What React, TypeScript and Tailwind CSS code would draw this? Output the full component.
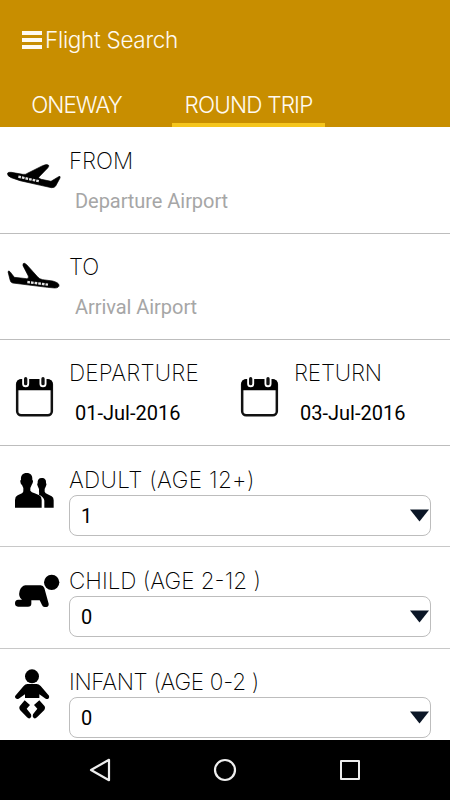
import { useState } from 'react';
import type { ReactNode } from 'react';
import clsx from 'clsx';

type TripType = 'oneway' | 'round';

function TakeoffIcon() {
  return (
    <svg className="w-[54px] h-[25px]" viewBox="21 72 162 75">
      <path d="M23 99 Q25 96 34 97 L68 103 Q76 105 84 99 L128 77 Q142 71 146 76 Q147 80 143 84 L116 112 Q117 116 124 118 L153 124 L176 110 Q182 107 180 114 L167 138 Q163 144 154 143 L122 136 L60 122 L34 113 Q20 107 23 99Z" stroke="#000" strokeWidth="2" />
      <path d="M55 110 L118 124" stroke="#e5e5e5" strokeWidth="7" strokeDasharray="8 3" />
    </svg>
  );
}

function LandingIcon() {
  return (
    <svg className="w-[54px] h-[27px]" viewBox="21 51 162 81">
      <path d="M24 80 Q26 76 30 80 L43 97 L80 101 Q88 101 85 93 L69 62 Q67 54 74 55 L80 59 L114 97 Q118 102 128 104 L158 108 Q177 113 177 121 Q177 129 164 129 L142 127 L38 114 Q31 112 30 104Z" stroke="#000" strokeWidth="2" />
      <path d="M82 111 L144 119" stroke="#e5e5e5" strokeWidth="7" strokeDasharray="8 3" />
    </svg>
  );
}

function CalendarIcon() {
  return (
    <svg className="w-[39px] h-[41px]" viewBox="45 63 117 123">
      <rect x="51.5" y="76" width="104" height="105" rx="12" fill="#fff" stroke="#111" strokeWidth="7.5" />
      <path d="M50 106 V86 Q50 74 62 73 H144 Q157 74 157 86 V106Z" />
      <path d="M77 70 V86 M129 70 V86" stroke="#fff" strokeWidth="21" strokeLinecap="round" />
      <path d="M77 71 V86 M129 71 V86" stroke="#111" strokeWidth="10" strokeLinecap="round" />
    </svg>
  );
}

function AdultsIcon() {
  return (
    <svg className="w-[41px] h-[37px]" viewBox="42 51 123 111">
      <path d="M80 54 C92 54 98 61 97 74 Q101 76 98 84 Q96 88 94 92 L91 99 V107 Q94 112 104 115 L118 121 Q125 125 125 135 V158 H45 V135 Q45 125 53 121 L66 115 Q71 112 70 106 V99 L66 90 Q62 88 61 80 Q60 76 63 74 C62 61 68 54 80 54Z" />
      <path d="M125 69 C135 69 139 75 138 84 Q141 87 138 93 L134 102 V110 Q136 115 143 118 L155 124 Q161 127 161 136 V158 H133 V137 Q132 126 117 119 Q118 115 117 110 V102 L113 93 Q110 87 113 84 C112 75 116 69 125 69Z" />
    </svg>
  );
}

function ChildIcon() {
  return (
    <svg className="w-[47px] h-[34px]" viewBox="42 42 141 102">
      <circle cx="155" cy="67" r="23" />
      <path d="M76 76 H122 Q130 76 133 84 L146 131 Q147 139 139 141 H134 Q128 141 126 135 L119 121 H94 V131 Q94 140 84 140 H54 Q45 140 45 130 Q45 119 55 119 H66 Q54 110 59 92 Q64 78 76 76Z" />
    </svg>
  );
}

function InfantIcon() {
  return (
    <svg className="w-[37px] h-[51px]" viewBox="42 36 111 153">
      <circle cx="96" cy="61" r="21" />
      <path d="M82 84 H110 Q116 84 122 90 L147 119 Q149 124 145 128 Q142 130 137 128 L118 115 V126 H75 V115 L56 128 Q51 131 47 127 Q43 123 46 119 L71 90 Q76 84 82 84Z" />
      <path d="M74 133 L90 147 L80 158 L93 175 Q96 181 91 186 Q86 189 81 184 L60 162 Q56 156 59 151Z M118 133 L102 147 L112 158 L99 175 Q96 181 101 186 Q106 189 111 184 L133 162 Q137 156 134 151Z" />
    </svg>
  );
}

function Label({ children, className }: { children: ReactNode; className: string }) {
  return (
    <div className={clsx("font-['Inter',sans-serif] text-[22.5px] leading-[28px] whitespace-nowrap", className)}>
      {children}
    </div>
  );
}

function AirportRow({ label, placeholder, icon, className }: { label: string; placeholder: string; icon: ReactNode; className: string }) {
  return (
    <div className={clsx('flex shrink-0 border-b border-[#bdbdbd] pl-[7px]', className)}>
      <div className="w-[62px] shrink-0">{icon}</div>
      <div>
        <Label className="font-[250] tracking-[-0.1px]">{label}</Label>
        <div className="pl-1.5 mt-3 text-xl leading-7 tracking-[-0.05px] text-[#a6a6a6]">{placeholder}</div>
      </div>
    </div>
  );
}

function DateField({ label, value, tracking }: { label: string; value: string; tracking: string }) {
  return (
    <div className="flex w-[225px] pl-[15px] pt-[19px]">
      <div className="w-[54px] shrink-0 pt-[17px]"><CalendarIcon /></div>
      <div>
        <Label className={clsx('font-[250]', tracking)}>{label}</Label>
        <div className="pl-1.5 mt-3 text-xl leading-7">{value}</div>
      </div>
    </div>
  );
}

function PassengerRow({ label, value, icon, tracking, className }: { label: string; value: number; icon: ReactNode; tracking: string; className: string }) {
  return (
    <div className={clsx('flex shrink-0 border-b border-[#c8c8c8] pl-3.5 pt-5', className)}>
      <div className="w-[55px] shrink-0">{icon}</div>
      <div className="w-[362px]">
        <Label className={clsx('font-[250]', tracking)}>{label}</Label>
        <button className="flex w-full h-[41px] mt-[1px] items-center justify-between rounded-lg border border-[#bdbdbd] pl-[11px] text-xl">
          <span>{value}</span>
          <svg className="w-5 h-[13px]" viewBox="0 0 20 13">
            <path d="M0 0.5 H19 L9.5 12.5Z" fill="#0b1626" />
          </svg>
        </button>
      </div>
    </div>
  );
}

export default function App() {
  const [trip, setTrip] = useState<TripType>('round');

  return (
    <div className="flex flex-col w-[450px] h-[800px] overflow-hidden bg-white text-black font-['Roboto',sans-serif]">
      <header className="h-[127px] shrink-0 bg-[#c88e00] text-[#fffaf0]">
        <div className="flex h-[83px] items-center pl-[22px]">
          <div className="flex flex-col gap-[3px] w-5 mt-[-3px]">
            <div className="h-1 bg-[#fffaf0]" />
            <div className="h-1 bg-[#fffaf0]" />
            <div className="h-1 bg-[#fffaf0]" />
          </div>
          <Label className="ml-[3px] -mt-1 font-light tracking-[-0.3px]">Flight Search</Label>
        </div>
        <nav className="flex h-11">
          <button onClick={() => setTrip('oneway')} className={clsx('w-[153px] h-full mr-[19px] pt-1 border-b-4', trip === 'oneway' ? 'border-[#f5c51c]' : 'border-transparent')}>
            <Label className="font-light tracking-[-1px]">ONEWAY</Label>
          </button>
          <button onClick={() => setTrip('round')} className={clsx('w-[153px] h-full pt-1 border-b-4', trip === 'round' ? 'border-[#f5c51c]' : 'border-transparent')}>
            <Label className="font-light tracking-[-0.8px]">ROUND TRIP</Label>
          </button>
        </nav>
      </header>

      <main className="flex flex-col flex-1 min-h-0 overflow-hidden">
        <AirportRow label="FROM" placeholder="Departure Airport" icon={<div className="pt-[17px]"><TakeoffIcon /></div>} className="h-[107px] pt-5" />
        <AirportRow label="TO" placeholder="Arrival Airport" icon={<div className="pt-[9px]"><LandingIcon /></div>} className="h-[106px] pt-[19px]" />
        <div className="flex h-[106px] shrink-0 border-b border-[#bdbdbd]">
          <DateField label="DEPARTURE" value="01-Jul-2016" tracking="tracking-[0.2px]" />
          <DateField label="RETURN" value="03-Jul-2016" tracking="tracking-[-0.2px]" />
        </div>
        <PassengerRow label="ADULT (AGE 12+)" value={1} icon={<div className="pt-[6px]"><AdultsIcon /></div>} tracking="tracking-[0.35px]" className="h-[101px]" />
        <PassengerRow label="CHILD (AGE 2-12 )" value={0} icon={<div className="pt-[7px]"><ChildIcon /></div>} tracking="tracking-[0px]" className="h-[102px]" />
        <PassengerRow label="INFANT (AGE 0-2 )" value={0} icon={<InfantIcon />} tracking="tracking-[-0.3px]" className="h-[101px] -mt-px" />
      </main>

      <footer className="flex h-[60px] shrink-0 items-center bg-black pl-[89px]">
        <svg className="w-[22px] h-6" viewBox="0 0 22 24" fill="none" stroke="#eee" strokeWidth="2.2" strokeLinejoin="round">
          <path d="M2 12 L20 1.8 V22.2Z" />
        </svg>
        <svg className="w-6 h-6 ml-[102px]" viewBox="0 0 24 24" fill="none" stroke="#eee" strokeWidth="2.2">
          <circle cx="12" cy="12" r="10" />
        </svg>
        <div className="ml-[103px] w-5 h-5 rounded-[1px] border-2 border-[#eee]" />
      </footer>
    </div>
  );
}
